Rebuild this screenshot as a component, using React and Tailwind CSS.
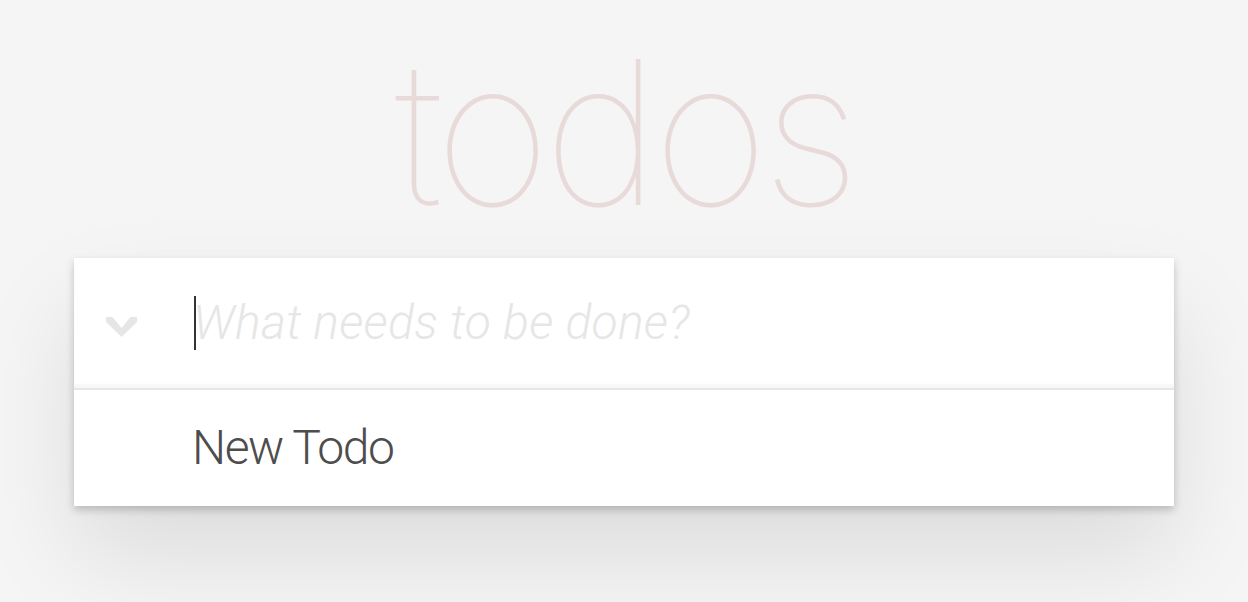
import { useState } from "react";

const todos = [{ id: 1, title: "New Todo", done: false }];

function Chevron() {
  return (
    <svg width="31" height="20" viewBox="0 0 31 20" className="block">
      <polygon points="0,0 6.5,0 15.5,11 24.5,0 31,0 31,5 15.5,20 0,5" fill="#e6e6e6" />
    </svg>
  );
}

export default function App() {
  const [items] = useState(todos);

  return (
    <div className="min-h-screen bg-[#f5f5f5] font-['Inter',sans-serif] text-[#4d4d4d]">
      <div className="mx-auto w-[1100px] pt-[32px]">
        <h1 className="h-[200px] text-center text-[200px] leading-[200px] font-thin tracking-[-7px] text-[#e9dada]">todos</h1>
        <section className="mt-[26px] bg-white font-['Roboto','Liberation_Sans',sans-serif] shadow-[0_4px_8px_0_rgba(0,0,0,0.2),0_50px_100px_0_rgba(0,0,0,0.1)]">
          <header className="flex h-[130px] items-center shadow-[inset_0_-4px_2px_rgba(0,0,0,0.03)]">
            <div className="w-[120px] pl-[32px] pt-[8px]">
              <Chevron />
            </div>
            <div className="flex items-center">
              <span className="h-[54px] w-[2px] bg-[#333]" />
              <span className="-ml-[3px] text-[48px] font-light italic tracking-[0.3px] text-[#e6e6e6]">What needs to be done?</span>
            </div>
          </header>
          <ul className="border-t-2 border-[#e6e6e6]">
            {items.map(item => (
              <li key={item.id} className="flex h-[116px] items-center pl-[118px] text-[48px] font-light tracking-[-1.4px] text-[#4d4d4d]">
                {item.title}
              </li>
            ))}
          </ul>
        </section>
      </div>
    </div>
  );
}
